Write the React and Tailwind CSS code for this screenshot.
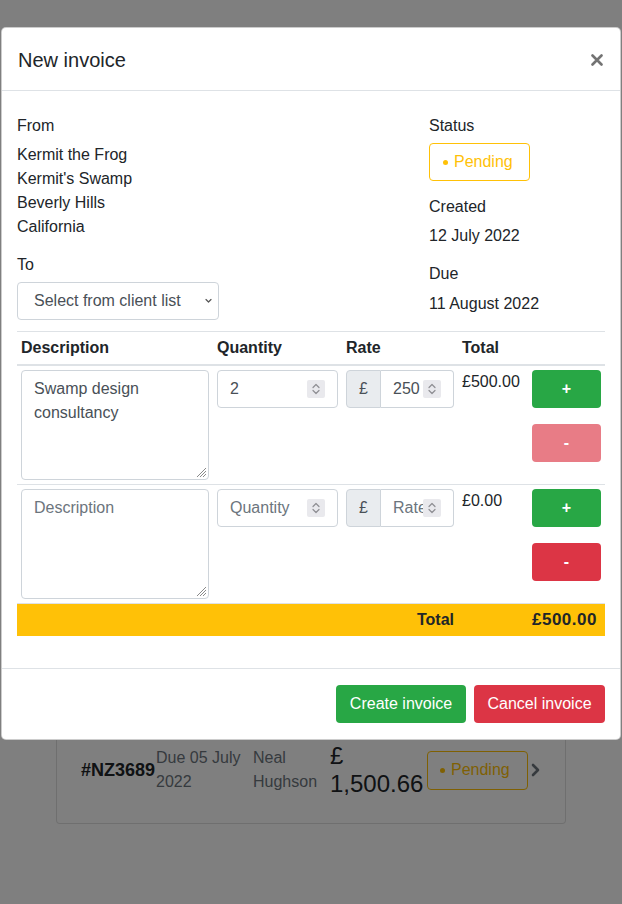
import React from "react";

function Spinner() {
  return (
    <div className="absolute right-[12px] top-1/2 -translate-y-1/2 w-[18px] h-[18px] bg-[#e9e9ed] rounded-[2px] flex items-center justify-center">
      <svg width="10" height="14" viewBox="0 0 10 14" fill="none" stroke="#8e8e93" strokeWidth="1.2" strokeLinecap="round" strokeLinejoin="round">
        <path d="M2 5.5 L5 2.5 L8 5.5" />
        <path d="M2 8.5 L5 11.5 L8 8.5" />
      </svg>
    </div>
  );
}

function ResizeHandle() {
  return (
    <svg className="absolute right-[2px] bottom-[2px]" width="10" height="10" viewBox="0 0 10 10" fill="none" stroke="#8a8a8a" strokeWidth="1">
      <path d="M10 1 L1 10 M10 4 L4 10 M10 7 L7 10" />
    </svg>
  );
}

function ItemRow({ desc, qty, rate, total, removeDisabled }) {
  const td = "p-1 align-top border-t border-[#dee2e6]";
  return (
    <tr>
      <td className={td}>
        <div className="relative h-[110px] border border-[#ced4da] rounded-[4px] px-3 py-[6px] leading-6 text-[#495057]">
          {desc ? desc : <span className="text-[#6c757d]">Description</span>}
          <ResizeHandle />
        </div>
      </td>
      <td className={td}>
        <div className="relative h-[38px] w-[121px] border border-[#ced4da] rounded-[4px] pl-3 flex items-center text-[#495057]">
          {qty ? qty : <span className="text-[#6c757d]">Quantity</span>}
          <Spinner />
        </div>
      </td>
      <td className={td}>
        <div className="flex h-[38px]">
          <div className="w-[35px] bg-[#e9ecef] border border-[#ced4da] rounded-l-[4px] flex items-center justify-center text-[#495057]">£</div>
          <div className="relative flex-1 border border-l-0 border-[#ced4da] rounded-r-[4px] pl-3 flex items-center overflow-hidden text-[#495057] whitespace-nowrap">
            {rate ? rate : <span className="text-[#6c757d]">Rate</span>}
            <Spinner />
          </div>
        </div>
      </td>
      <td className={`${td} leading-6`}>{total}</td>
      <td className={td}>
        <div className="flex flex-col gap-4">
          <button className="h-[38px] w-full rounded-[4px] bg-[#28a745] text-white font-bold leading-6">+</button>
          <button className={`h-[38px] w-full rounded-[4px] text-white font-bold leading-6 ${removeDisabled ? "bg-[#e87c86]" : "bg-[#dc3545]"}`}>-</button>
        </div>
      </td>
    </tr>
  );
}

function Badge() {
  return (
    <div className="w-[101px] h-[38px] border border-[#ffc107] rounded-[4px] flex items-center pl-[13px]">
      <span className="w-[5px] h-[5px] rounded-full bg-[#ffc107]" />
      <span className="ml-[6px] text-[#ffc107] font-medium">Pending</span>
    </div>
  );
}

export default function App() {
  const th = "p-1 text-left font-bold leading-6 border-t border-b-2 border-[#dee2e6]";
  return (
    <div className="relative w-[622px] h-[904px] overflow-hidden bg-white text-[#212529] text-base font-['Liberation_Sans','Arial',sans-serif]">
      {/* Background page */}
      <div className="pt-[700px] pl-[56px]">
        <div className="w-[510px] border border-black/[0.125] rounded-[4px] bg-white pt-[40px] pb-[24px] pl-[24px]">
          <div className="flex items-center h-[58px]">
            <div className="w-[75px] text-[18px] font-bold">#NZ3689</div>
            <div className="w-[97px] leading-6 text-[#6c757d]">Due 05 July 2022</div>
            <div className="w-[77px] leading-6 text-[#6c757d]">Neal Hughson</div>
            <div className="w-[97px] text-[24px] leading-[28px] font-medium">£ 1,500.66</div>
            <div className="h-[39px] w-[101px] border border-[#ffc107] rounded-[4px] flex items-center pl-[12px]">
              <span className="w-[5px] h-[5px] rounded-full bg-[#ffc107]" />
              <span className="ml-[6px] text-[#ffc107] font-medium">Pending</span>
            </div>
            <svg className="ml-[3px]" width="9" height="14" viewBox="0 0 9 14" fill="none" stroke="#6c757d" strokeWidth="2.6" strokeLinecap="round" strokeLinejoin="round">
              <path d="M2 2 L7 7 L2 12" />
            </svg>
          </div>
        </div>
      </div>

      {/* Backdrop */}
      <div className="absolute inset-0 bg-black/50" />

      {/* Modal */}
      <div className="absolute inset-x-0 top-[27px] pl-px">
        <div className="w-[620px] bg-white border border-black/20 rounded-[5px]">
          <div className="flex items-center justify-between pl-4 pr-[17px] pt-[1px] h-[63px] border-b border-[#dee2e6]">
            <h5 className="text-[20px] leading-[30px] font-medium">New invoice</h5>
            <svg width="12" height="12" viewBox="0 0 12 12" stroke="#737373" strokeWidth="2.6" strokeLinecap="round">
              <path d="M1.5 1.5 L10.5 10.5 M10.5 1.5 L1.5 10.5" />
            </svg>
          </div>

          <div className="px-[15px] pt-[25px] pb-4">
            <div className="flex justify-between">
              <div>
                <h6 className="text-base font-medium leading-[1.2] mb-2">From</h6>
                <p className="leading-6 mb-4">
                  Kermit the Frog<br />Kermit's Swamp<br />Beverly Hills<br />California
                </p>
                <h6 className="text-base font-medium leading-[1.2] mb-2">To</h6>
                <div className="relative w-[202px] h-[38px] border border-[#ced4da] rounded-[4px] pl-4 flex items-center text-[#495057]">
                  Select from client list
                  <svg className="absolute right-[6px] top-1/2 -translate-y-1/2" width="7" height="5" viewBox="0 0 7 5" fill="none" stroke="#555" strokeWidth="1.2" strokeLinecap="round" strokeLinejoin="round">
                    <path d="M1 1 L3.5 3.5 L6 1" />
                  </svg>
                </div>
              </div>
              <div className="w-[176px]">
                <h6 className="text-base font-medium leading-[1.2] mb-2">Status</h6>
                <div className="mb-4"><Badge /></div>
                <h6 className="text-base font-medium leading-[1.2] mb-2">Created</h6>
                <p className="leading-6 mb-4">12 July 2022</p>
                <h6 className="text-base font-medium leading-[1.2] mb-2">Due</h6>
                <p className="leading-6 mb-[15px]">11 August 2022</p>
              </div>
            </div>

            <table className="w-full table-fixed border-collapse mb-4">
              <colgroup>
                <col className="w-[196px]" />
                <col className="w-[129px]" />
                <col className="w-[116px]" />
                <col className="w-[70px]" />
                <col className="w-[77px]" />
              </colgroup>
              <thead>
                <tr>
                  <th className={th}>Description</th>
                  <th className={th}>Quantity</th>
                  <th className={th}>Rate</th>
                  <th className={th}>Total</th>
                  <th className={th}></th>
                </tr>
              </thead>
              <tbody>
                <ItemRow desc="Swamp design consultancy" qty="2" rate="250" total="£500.00" removeDisabled />
                <ItemRow total="£0.00" />
                <tr className="bg-[#ffc107]">
                  <td colSpan={3} className="p-1 text-right font-bold leading-6 border-t border-[#dee2e6]">Total</td>
                  <td className="p-1 border-t border-[#dee2e6]"></td>
                  <td className="p-1 text-[17px] font-bold leading-6 tracking-[0.5px] whitespace-nowrap border-t border-[#dee2e6]">£500.00</td>
                </tr>
              </tbody>
            </table>
          </div>

          <div className="border-t border-[#dee2e6] flex justify-end gap-2 pt-4 pb-4 pr-[15px]">
            <button className="w-[130px] h-[38px] rounded-[4px] bg-[#28a745] text-white leading-6">Create invoice</button>
            <button className="w-[131px] h-[38px] rounded-[4px] bg-[#dc3545] text-white leading-6">Cancel invoice</button>
          </div>
        </div>
      </div>
    </div>
  );
}
